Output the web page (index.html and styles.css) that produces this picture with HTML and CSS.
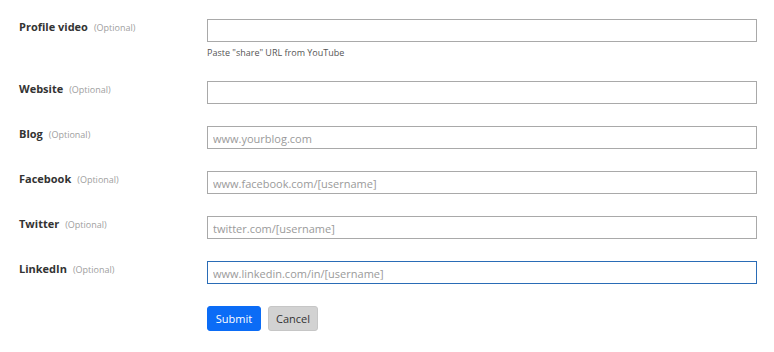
FILE: index.html
```html
<!DOCTYPE html>
<html>
<head>
<meta charset="utf-8">
<link rel="stylesheet" href="styles.css">
</head>
<body>
<form class="form">
  <div class="row row-help">
    <div class="label"><span class="name">Profile video</span><span class="opt">(Optional)</span></div>
    <div class="field">
      <input class="input" type="text">
      <div class="help">Paste "share" URL from YouTube</div>
    </div>
  </div>
  <div class="row">
    <div class="label"><span class="name">Website</span><span class="opt">(Optional)</span></div>
    <div class="field"><input class="input" type="text"></div>
  </div>
  <div class="row">
    <div class="label"><span class="name">Blog</span><span class="opt">(Optional)</span></div>
    <div class="field"><input class="input" type="text" placeholder="www.yourblog.com"></div>
  </div>
  <div class="row">
    <div class="label"><span class="name">Facebook</span><span class="opt">(Optional)</span></div>
    <div class="field"><input class="input" type="text" placeholder="www.facebook.com/[username]"></div>
  </div>
  <div class="row">
    <div class="label"><span class="name">Twitter</span><span class="opt">(Optional)</span></div>
    <div class="field"><input class="input" type="text" placeholder="twitter.com/[username]"></div>
  </div>
  <div class="row">
    <div class="label"><span class="name">LinkedIn</span><span class="opt">(Optional)</span></div>
    <div class="field"><input class="input input-focus" type="text" placeholder="www.linkedin.com/in/[username]"></div>
  </div>
  <div class="row">
    <div class="label"></div>
    <div class="field actions">
      <button type="button" class="btn btn-primary">Submit</button>
      <button type="button" class="btn btn-secondary">Cancel</button>
    </div>
  </div>
</form>
</body>
</html>
```

FILE: styles.css
```css
html, body {
  margin: 0;
  padding: 0;
  background: #ffffff;
}
body {
  font-family: "Open Sans", "Noto Sans", sans-serif;
  color: #333333;
}
.form {
  padding: 19px 17px 0 19px;
}
.row {
  display: flex;
  margin-bottom: 22px;
}
.label {
  width: 188px;
  flex: 0 0 188px;
  line-height: 13px;
  white-space: nowrap;
}
.name {
  font-size: 11px;
  font-weight: 700;
  color: #333333;
}
.opt {
  font-size: 9px;
  color: #a0a0a0;
  margin-left: 6px;
}
.field {
  width: 550px;
  flex: 0 0 550px;
}
.input {
  display: block;
  box-sizing: border-box;
  width: 550px;
  height: 23px;
  margin: 0;
  padding: 1px 5px 0;
  border: 1px solid #a9a9a9;
  border-radius: 0;
  font-family: "Open Sans", "Noto Sans", sans-serif;
  font-size: 11px;
  color: #333333;
  background: #ffffff;
  outline: none;
}
.input::placeholder {
  color: #9a9a9a;
  opacity: 1;
}
.input-focus {
  border-color: #2a6cb6;
}
.help {
  margin-top: 4px;
  font-size: 9px;
  line-height: 13px;
  color: #555555;
}
.actions {
  display: flex;
  gap: 7px;
}
.btn {
  box-sizing: border-box;
  height: 25px;
  padding: 0 7px;
  border-radius: 3px;
  font-family: "Open Sans", "Noto Sans", sans-serif;
  font-size: 11px;
  line-height: 23px;
  cursor: pointer;
}
.btn-primary {
  background: #0b6cf6;
  border: 1px solid #0b6cf6;
  color: #ffffff;
  width: 54px;
}
.btn-secondary {
  background: #d2d2d2;
  border: 1px solid #c6c6c6;
  color: #333333;
  width: 50px;
}
```
